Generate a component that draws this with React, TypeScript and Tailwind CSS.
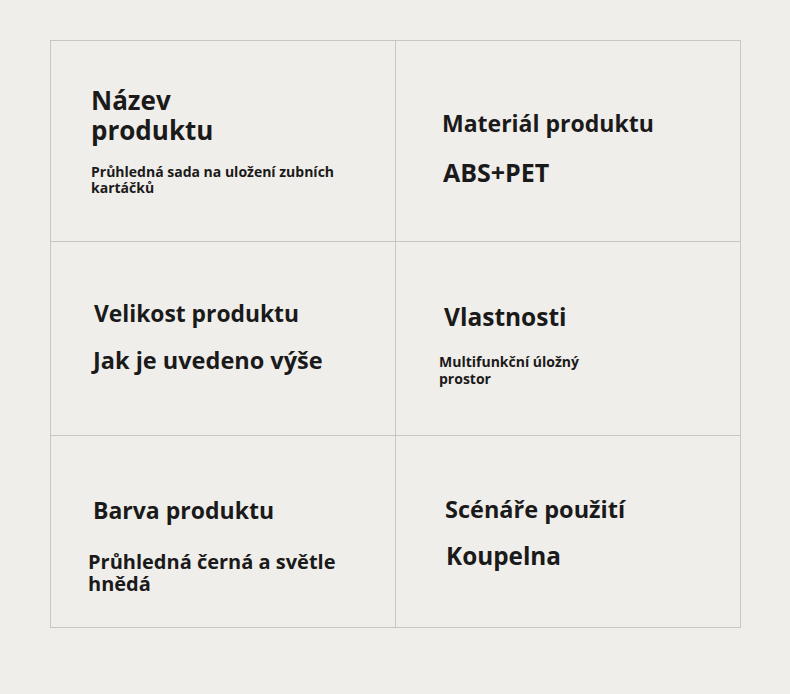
import React from "react";

const font = { fontFamily: '"Open Sans", "Noto Sans", "Liberation Sans", sans-serif' };

export default function App() {
  return (
    <div
      className="w-[790px] h-[694px] bg-[#f0eeea] pt-[40px] pl-[50px] text-[#1a1a1a] font-bold"
      style={font}
    >
      <div className="grid w-[691px] grid-cols-[344px_344px] grid-rows-[200px_193px_191px] gap-px border border-[#c9c5c0] bg-[#c9c5c0]">
        {/* Cell 1 */}
        <div className="flex flex-col bg-[#f0eeea] pt-[44px] pl-[40px]">
          <div className="w-[150px] text-[26px] leading-[30px]">Název produktu</div>
          <div className="mt-[19px] w-[258px] text-[14px] leading-[16px]">
            Průhledná sada na uložení zubních kartáčků
          </div>
        </div>
        {/* Cell 2 */}
        <div className="flex flex-col bg-[#f0eeea] pt-[67px] pl-[46px]">
          <div className="text-[23px] leading-[30px]">Materiál produktu</div>
          <div className="mt-[19px] ml-[1px] text-[25px] leading-[30px]">ABS+PET</div>
        </div>
        {/* Cell 3 */}
        <div className="flex flex-col bg-[#f0eeea] pt-[57px] pl-[43px]">
          <div className="text-[22.8px] leading-[30px]">Velikost produktu</div>
          <div className="mt-[16px] -ml-[1px] text-[23.5px] leading-[30px]">Jak je uvedeno výše</div>
        </div>
        {/* Cell 4 */}
        <div className="flex flex-col bg-[#f0eeea] pt-[60px] pl-[43px]">
          <div className="ml-[5px] text-[24.5px] leading-[30px]">Vlastnosti</div>
          <div className="mt-[21px] w-[165px] text-[14px] leading-[17px]">
            Multifunkční úložný prostor
          </div>
        </div>
        {/* Cell 5 */}
        <div className="flex flex-col bg-[#f0eeea] pt-[59px] pl-[37px]">
          <div className="ml-[5px] text-[23px] leading-[30px]">Barva produktu</div>
          <div className="mt-[26px] w-[265px] text-[20px] leading-[22px]">
            Průhledná černá a světle hnědá
          </div>
        </div>
        {/* Cell 6 */}
        <div className="flex flex-col bg-[#f0eeea] pt-[58px] pl-[49px]">
          <div className="text-[23.5px] leading-[30px]">Scénáře použití</div>
          <div className="mt-[17px] ml-[1px] text-[24.3px] leading-[30px]">Koupelna</div>
        </div>
      </div>
    </div>
  );
}
